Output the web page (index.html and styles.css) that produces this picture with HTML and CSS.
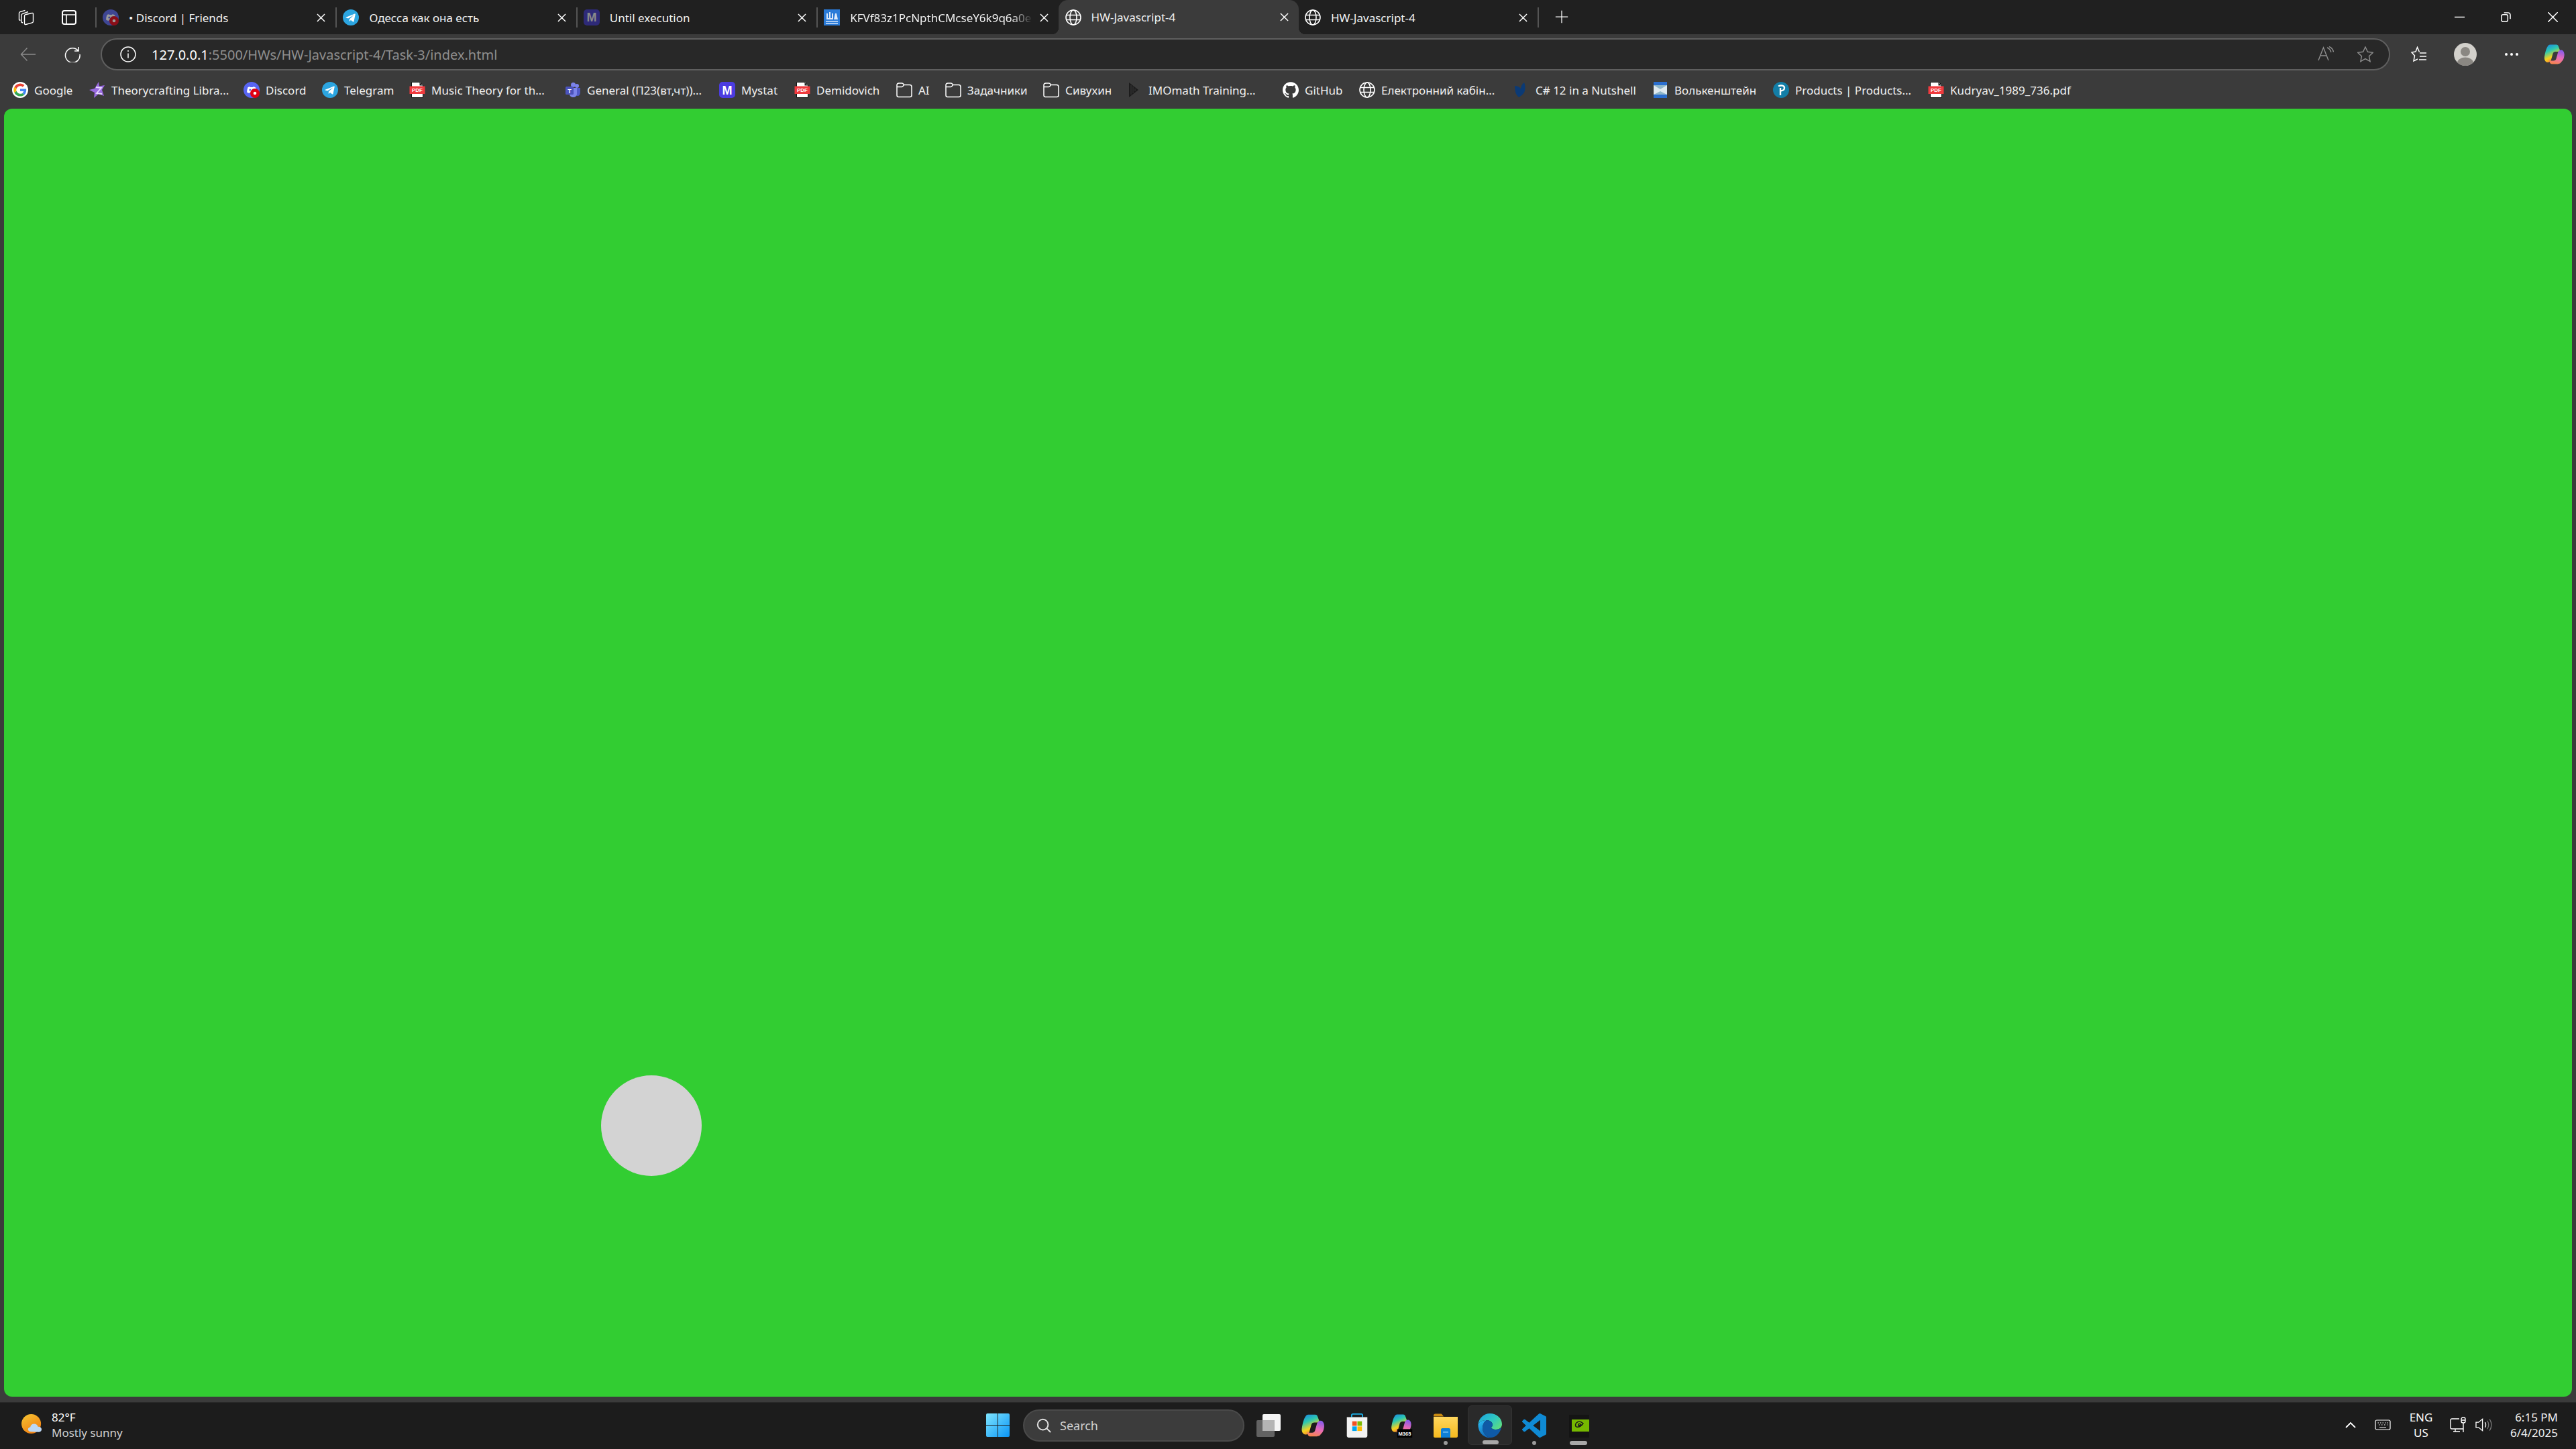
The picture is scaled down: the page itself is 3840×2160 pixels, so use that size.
FILE: index.html
```html
<!DOCTYPE html>
<html lang="en">
<head>
    <meta charset="UTF-8">
    <title>HW-Javascript-4</title>
    <link rel="stylesheet" href="styles.css">
</head>
<body>
    <svg class="defs" xmlns="http://www.w3.org/2000/svg">
        <defs>
            <linearGradient id="gCopL" x1="0" y1="0" x2="0.4" y2="1">
                <stop offset="0" stop-color="#1a7fe8"/><stop offset="0.4" stop-color="#2cc9b0"/><stop offset="0.75" stop-color="#f5d320"/><stop offset="1" stop-color="#f58a2c"/>
            </linearGradient>
            <linearGradient id="gCopR" x1="0.6" y1="0" x2="0.3" y2="1">
                <stop offset="0" stop-color="#8a5be8"/><stop offset="0.5" stop-color="#e86bb8"/><stop offset="1" stop-color="#f8864a"/>
            </linearGradient>
            <linearGradient id="gWin" x1="0" y1="0" x2="1" y2="1">
                <stop offset="0" stop-color="#7fe6ff"/><stop offset="1" stop-color="#0a94f5"/>
            </linearGradient>
            <linearGradient id="gEdge" x1="0.2" y1="0.1" x2="0.6" y2="1">
                <stop offset="0" stop-color="#27b4ec"/><stop offset="1" stop-color="#0f63b8"/>
            </linearGradient>
            <linearGradient id="gEdgeTop" x1="0" y1="0" x2="1" y2="0.7">
                <stop offset="0" stop-color="#1a9fe0"/><stop offset="0.6" stop-color="#2fc7c0"/><stop offset="1" stop-color="#5bdc84"/>
            </linearGradient>
            <linearGradient id="gSun" x1="0.2" y1="0" x2="0.8" y2="1">
                <stop offset="0" stop-color="#f6c030"/><stop offset="1" stop-color="#f07a10"/>
            </linearGradient>
            <linearGradient id="gFolder" x1="0" y1="0" x2="0" y2="1">
                <stop offset="0" stop-color="#ffd75e"/><stop offset="1" stop-color="#f5b91e"/>
            </linearGradient>

            <symbol id="globe" viewBox="0 0 24 24">
                <g fill="none" stroke="#fff" stroke-width="1.6">
                    <circle cx="12" cy="12" r="11"/><ellipse cx="12" cy="12" rx="5" ry="11"/>
                    <path d="M1.500 8.500h21M1.500 15.500h21"/>
                </g>
            </symbol>
            <symbol id="discord" viewBox="0 0 24 24">
                <circle cx="12" cy="12" r="12" fill="#5865f2"/>
                <path d="M6 8.500c2-1.300 3-1.300 3.500-1.300l.5.8h4l.5-.8c.5 0 1.500 0 3.500 1.300 1 2.300 1.500 4.500 1.300 7-1.300 1-2.500 1.300-3.500 1.500l-.8-1.300H9.500l-.8 1.300c-1-.2-2.200-.5-3.500-1.500-.2-2.500.3-4.700 1.300-7z" fill="#fff"/>
                <circle cx="9.800" cy="12" r="1.500" fill="#5865f2"/><circle cx="14.200" cy="12" r="1.500" fill="#5865f2"/>
                <circle cx="17" cy="17" r="7" fill="#e00012"/><circle cx="17" cy="17" r="2.300" fill="#fff"/>
            </symbol>
            <symbol id="telegram" viewBox="0 0 24 24">
                <circle cx="12" cy="12" r="12" fill="#2ca5e0"/>
                <path d="M4.800 11.800l13-5.200c.6-.2 1.100.2.900.9l-2.200 10.400c-.2.700-.6.900-1.200.5l-3.300-2.400-1.600 1.500c-.2.200-.4.300-.7.300l.2-3.300 6-5.400c.3-.2-.1-.4-.4-.2l-7.400 4.700-3.200-1c-.7-.2-.7-.7.100-1z" fill="#fff"/>
            </symbol>
            <symbol id="pdf" viewBox="0 0 24 24">
                <path d="M3.500 .5h13l4 4v19h-17z" fill="#fff" stroke="#111" stroke-width="1"/>
                <path d="M15.500 .5v5h5z" fill="#222"/>
                <rect x="0.500" y="6.500" width="23" height="11.500" fill="#f03a3e"/>
                <text x="12" y="15.300" text-anchor="middle" class="pdf-text">PDF</text>
            </symbol>
            <symbol id="folder" viewBox="0 0 24 24">
                <path d="M1 20V5c0-2 1-3 3-3h4.500c1.200 0 1.800.6 2.400 1.500l.6 1h8.500c2 0 3 1 3 3V20c0 1.500-1 2.500-2.500 2.500h-17C2 22.500 1 21.500 1 20zM1 7.500h7.500c1.500 0 2-1.500 3-3" fill="none" stroke="#fff" stroke-width="1.500"/>
            </symbol>
            <symbol id="copilot" viewBox="0 0 32 32">
                <path d="M10 1.500h9c2 0 3 1 3.500 3L26 14c-1-1.500-2.500-2-4-2h-4c-2 0-3.500 1-4 3l-2.500 9c-.8 2.500-2.500 4-5 4C3 28 .8 24 1.500 19.500 2.500 13 4 7.500 6 4.500 7 2.500 8.300 1.500 10 1.500z" fill="url(#gCopL)"/>
                <path d="M22 30.500h-9c-2 0-3.200-1-3.800-3l-1-3.500c1 1 2 1.500 3.300 1.500H15c2 0 3.500-1 4-3l2.500-9c.8-2.500 2.500-4 5-4 3 0 5.200 4 4.500 8.500-1 6.500-2.500 7.500-4.500 9.500-1 2-2.800 2.500-4.500 2.500z" fill="url(#gCopR)"/>
            </symbol>
        </defs>
    </svg>

    <div class="window">
        <div class="titlebar">
            <div class="tb-left">
                <svg class="ico-24" viewBox="0 0 24 24"><g fill="none" stroke="#fff" stroke-width="1.400" stroke-linejoin="round"><path d="M3.500 16.500L1.500 15.500V5.500c0-1 .5-1.500 1.500-1.800L10.500 1.500"/><path d="M7 20L5 19V8.500c0-1 .5-1.500 1.500-1.800L15 3.500"/><path d="M9.500 9.500c0-1 .5-1.500 1.500-1.800L20.500 5.500c1-.3 2 .3 2 1.500v11c0 1-.5 1.500-1.500 1.800L11.500 22.500c-1 .3-2-.3-2-1.500z"/></g></svg>
                <svg class="ico-24" viewBox="0 0 24 24"><g fill="none" stroke="#fff" stroke-width="2"><rect x="2" y="2" width="20" height="20" rx="3"/><path d="M2 8h20M8 8v14" stroke-width="1.600"/></g></svg>
            </div>
            <div class="tab">
                <svg class="favicon dim" viewBox="0 0 24 24"><use href="#discord"/></svg>
                <span class="tab-title">• Discord | Friends</span>
                <svg class="tab-close" viewBox="0 0 14 14"><path d="M1 1l12 12M13 1L1 13"/></svg>
            </div>
            <div class="tab">
                <svg class="favicon" viewBox="0 0 24 24"><use href="#telegram"/></svg>
                <span class="tab-title">Одесса как она есть</span>
                <svg class="tab-close" viewBox="0 0 14 14"><path d="M1 1l12 12M13 1L1 13"/></svg>
            </div>
            <div class="tab">
                <svg class="favicon" viewBox="0 0 24 24"><rect width="24" height="24" rx="5" fill="#2e2a78"/><text x="12" y="18" text-anchor="middle" class="fav-m dim-m">M</text></svg>
                <span class="tab-title">Until execution</span>
                <svg class="tab-close" viewBox="0 0 14 14"><path d="M1 1l12 12M13 1L1 13"/></svg>
            </div>
            <div class="tab tab-before-active">
                <svg class="favicon" viewBox="0 0 24 24"><rect width="24" height="24" fill="#2a7bd8"/><path d="M4 15V6h2v7h2V4h2v9h2V6h2v9zM15 15l2-9h2l2 9z M3 17h18v1.500H3zM3 20h18v1.500H3z" fill="#dce9fa"/></svg>
                <span class="tab-title tab-fade">KFVf83z1PcNpthCMcseY6k9q6a0e</span>
                <svg class="tab-close" viewBox="0 0 14 14"><path d="M1 1l12 12M13 1L1 13"/></svg>
            </div>
            <div class="tab active">
                <svg class="favicon" viewBox="0 0 24 24"><use href="#globe"/></svg>
                <span class="tab-title">HW-Javascript-4</span>
                <svg class="tab-close" viewBox="0 0 14 14"><path d="M1 1l12 12M13 1L1 13"/></svg>
            </div>
            <div class="tab">
                <svg class="favicon" viewBox="0 0 24 24"><use href="#globe"/></svg>
                <span class="tab-title">HW-Javascript-4</span>
                <svg class="tab-close" viewBox="0 0 14 14"><path d="M1 1l12 12M13 1L1 13"/></svg>
            </div>
            <svg class="new-tab" viewBox="0 0 24 24"><path d="M12 1v22M1 12h22"/></svg>
            <div class="caption">
                <div class="cap-btn"><svg class="ico-16" viewBox="0 0 16 16"><path d="M0 8h16"/></svg></div>
                <div class="cap-btn"><svg class="ico-16" viewBox="0 0 16 16"><rect x="1" y="4" width="10" height="11" rx="2.500"/><path d="M5 1h6c2.500 0 4 1.500 4 4v6"/></svg></div>
                <div class="cap-btn"><svg class="ico-16" viewBox="0 0 16 16"><path d="M0 0l16 16M16 0L0 16"/></svg></div>
            </div>
        </div>

        <div class="toolbar">
            <div class="nav-btn">
                <svg class="ico-24 back" viewBox="0 0 24 24"><path d="M23 12H1.500M10.500 2.500L1.500 12l9 9.500"/></svg>
            </div>
            <div class="nav-btn">
                <svg class="ico-24 reload" viewBox="0 0 24 24"><path d="M20.500 6.500A10.800 10.800 0 1 0 23 12M21 1v6h-6"/></svg>
            </div>
            <div class="address">
                <svg class="ico-24 info" viewBox="0 0 24 24"><circle cx="12" cy="12" r="11"/><path d="M12 10.500v7"/><path d="M12 6v2"/></svg>
                <span class="url"><span class="url-host">127.0.0.1</span>:5500/HWs/HW-Javascript-4/Task-3/index.html</span>
                <svg class="ico-24 addr-ico" viewBox="0 0 24 24"><path d="M1 21L8.500 2l7.500 19M4 14h9M14 2c3 1 5 3.500 6 7M17 .5c3.500 1.500 6 4.500 6.500 8"/></svg>
                <svg class="ico-24 addr-ico" viewBox="0 0 24 24"><path d="M12 1l3.400 7.300 8 1-5.900 5.400 1.600 7.900-7.100-4-7.100 4 1.600-7.900L.6 9.300l8-1z"/></svg>
            </div>
            <div class="tool-btn">
                <svg class="ico-24 favs" viewBox="0 0 24 24"><path d="M12.500 8.500L9.500 1.500 7 8 1 9l4.500 5L4 22l6-3M13 10h10M13 15h10M12 20h11"/></svg>
            </div>
            <div class="tool-btn">
                <svg class="avatar" viewBox="0 0 34 34"><defs><clipPath id="avClip"><circle cx="17" cy="17" r="17"/></clipPath></defs><circle cx="17" cy="17" r="17" fill="#d2d0cb"/><g clip-path="url(#avClip)" fill="#8a8782"><circle cx="17" cy="13" r="7"/><ellipse cx="17" cy="30" rx="12" ry="8.500"/></g></svg>
            </div>
            <div class="tool-btn">
                <svg class="dots" viewBox="0 0 20 4"><circle cx="2" cy="2" r="2"/><circle cx="10" cy="2" r="2"/><circle cx="18" cy="2" r="2"/></svg>
            </div>
            <div class="tool-btn last">
                <svg class="copilot" viewBox="0 0 32 32"><use href="#copilot"/></svg>
            </div>
        </div>

        <div class="bookmarks">
            <div class="bm"><svg class="bm-ico" viewBox="-6 -6 60 60"><circle cx="24" cy="24" r="30" fill="#fff"/><path fill="#EA4335" d="M24 9.500c3.540 0 6.710 1.220 9.210 3.600l6.850-6.850C35.900 2.380 30.470 0 24 0 14.620 0 6.510 5.380 2.560 13.220l7.980 6.190C12.430 13.720 17.740 9.500 24 9.500z"/><path fill="#4285F4" d="M46.980 24.550c0-1.570-.15-3.090-.38-4.550H24v9.020h12.940c-.58 2.960-2.260 5.480-4.780 7.180l7.730 6c4.510-4.180 7.090-10.360 7.090-17.650z"/><path fill="#FBBC05" d="M10.530 28.590c-.48-1.450-.76-2.990-.76-4.590s.27-3.140.76-4.590l-7.980-6.190C.92 16.460 0 20.120 0 24c0 3.880.92 7.540 2.560 10.780l7.970-6.190z"/><path fill="#34A853" d="M24 48c6.480 0 11.930-2.130 16.090-5.810l-7.730-6c-2.150 1.450-4.920 2.300-8.360 2.300-6.260 0-11.570-4.220-13.470-9.910l-7.980 6.190C6.510 42.620 14.620 48 24 48z"/></svg><span>Google</span></div>
            <div class="bm"><svg class="bm-ico" viewBox="0 0 24 24"><path d="M14 0l1 6.500 8-1.500-4 7 3 9-8-3-7 6 1-8-8-4 8-2z" fill="#9a6be0"/><path d="M10 8l8 1-7 8 8 1" fill="none" stroke="#e6d8ff" stroke-width="1.800"/></svg><span>Theorycrafting Libra...</span></div>
            <div class="bm"><svg class="bm-ico" viewBox="0 0 24 24"><use href="#discord"/></svg><span>Discord</span></div>
            <div class="bm"><svg class="bm-ico" viewBox="0 0 24 24"><use href="#telegram"/></svg><span>Telegram</span></div>
            <div class="bm"><svg class="bm-ico" viewBox="0 0 24 24"><use href="#pdf"/></svg><span>Music Theory for th...</span></div>
            <div class="bm"><svg class="bm-ico" viewBox="0 0 24 24"><circle cx="18" cy="6" r="3" fill="#7b83eb"/><circle cx="12.500" cy="4.500" r="3.500" fill="#7b83eb"/><path d="M15 9h8v7c0 3-2 5-4 5s-4-2-4-5z" fill="#5059c9"/><path d="M7 9h11v9c0 3-2.500 5-5.500 5S7 21 7 18z" fill="#7b83eb"/><rect x="1" y="7" width="12" height="12" rx="1.500" fill="#4b53bc"/><text x="7" y="16.500" text-anchor="middle" class="fav-t">T</text></svg><span>General (П23(вт,чт))...</span></div>
            <div class="bm"><svg class="bm-ico" viewBox="0 0 24 24"><rect width="24" height="24" rx="5" fill="#4b3ce0"/><text x="12" y="18.500" text-anchor="middle" class="fav-m">M</text></svg><span>Mystat</span></div>
            <div class="bm"><svg class="bm-ico" viewBox="0 0 24 24"><use href="#pdf"/></svg><span>Demidovich</span></div>
            <div class="bm"><svg class="bm-ico" viewBox="0 0 24 24"><use href="#folder"/></svg><span>AI</span></div>
            <div class="bm"><svg class="bm-ico" viewBox="0 0 24 24"><use href="#folder"/></svg><span>Задачники</span></div>
            <div class="bm"><svg class="bm-ico" viewBox="0 0 24 24"><use href="#folder"/></svg><span>Сивухин</span></div>
            <div class="bm"><svg class="bm-ico" viewBox="0 0 24 24"><path d="M4 1l14 11L4 23z" fill="#1c1c1c"/><path d="M7 5v14M10 7v10M13 10v4" stroke="#3b3b3b" stroke-width="1"/></svg><span>IMOmath Training...</span></div>
            <div class="bm"><svg class="bm-ico" viewBox="0 0 24 24"><path fill="#fff" d="M12 .297c-6.630 0-12 5.373-12 12 0 5.303 3.438 9.800 8.205 11.385.6.113.82-.258.82-.577 0-.285-.01-1.040-.015-2.040-3.338.724-4.042-1.610-4.042-1.610C4.422 18.070 3.633 17.700 3.633 17.700c-1.087-.744.084-.729.084-.729 1.205.084 1.838 1.236 1.838 1.236 1.070 1.835 2.809 1.305 3.495.998.108-.776.417-1.305.76-1.605-2.665-.3-5.466-1.332-5.466-5.930 0-1.310.465-2.380 1.235-3.220-.135-.303-.54-1.523.105-3.176 0 0 1.005-.322 3.300 1.230.96-.267 1.980-.399 3-.405 1.020.006 2.040.138 3 .405 2.280-1.552 3.285-1.230 3.285-1.230.645 1.653.24 2.873.12 3.176.765.84 1.230 1.910 1.230 3.220 0 4.610-2.805 5.625-5.475 5.920.42.36.81 1.096.81 2.220 0 1.606-.015 2.896-.015 3.286 0 .315.21.69.825.57C20.565 22.092 24 17.592 24 12.297c0-6.627-5.373-12-12-12"/></svg><span>GitHub</span></div>
            <div class="bm"><svg class="bm-ico" viewBox="0 0 24 24"><use href="#globe"/></svg><span>Електронний кабін...</span></div>
            <div class="bm"><svg class="bm-ico" viewBox="0 0 24 24"><path d="M2 6c3 0 7 1.500 9 4 0-3 2-7 5-9 2 4 2 11 0 15-2 3-5 5-8 7-2-2-4-4-5-8-.6-3-1-6-1-9z" fill="#0b3a75"/></svg><span>C# 12 in a Nutshell</span></div>
            <div class="bm"><svg class="bm-ico" viewBox="0 0 24 24"><rect x="2" width="20" height="24" fill="#2a6ecf"/><rect x="2" y="5" width="20" height="14" fill="#dfe9ef"/><path d="M2 5l10 6 10-6M2 19l10-5 10 5" fill="#8fb6c9"/></svg><span>Волькенштейн</span></div>
            <div class="bm"><svg class="bm-ico" viewBox="0 0 24 24"><circle cx="12" cy="12" r="12" fill="#137ea7"/><path d="M8 6.500c4-2 9-1 9 2.500s-4 4.500-6 4.500M11 9v11" fill="none" stroke="#fff" stroke-width="2.400"/></svg><span>Products | Products...</span></div>
            <div class="bm"><svg class="bm-ico" viewBox="0 0 24 24"><use href="#pdf"/></svg><span>Kudryav_1989_736.pdf</span></div>
        </div>

        <main class="stage">
            <div class="ball"></div>
        </main>
    </div>

    <footer class="taskbar">
        <div class="weather">
            <svg class="weather-ico" viewBox="0 0 34 32"><circle cx="15" cy="15" r="15" fill="url(#gSun)"/><path d="M15 27c-3 0-5-1.500-5-3.500 0-2 1.500-3.500 3.500-3.500.5-3 3-5 6-5s5.500 2 6 4.500c3-.5 5.500 1.500 5.500 4 0 2.200-1.800 4-4 4z" fill="#bcd8f6"/></svg>
            <div class="weather-text">
                <div class="temp">82°F</div>
                <div class="cond">Mostly sunny</div>
            </div>
        </div>
        <div class="task-center">
            <svg class="start" viewBox="0 0 35 35"><path d="M2 0h15v17H0V2a2 2 0 0 1 2-2zM18 0h15a2 2 0 0 1 2 2v15H18zM0 18h17v17H2a2 2 0 0 1-2-2zM18 18h17v15a2 2 0 0 1-2 2H18z" fill="url(#gWin)"/></svg>
            <div class="search">
                <svg class="search-ico" viewBox="0 0 24 24"><circle cx="10.500" cy="10.500" r="8.500"/><path d="M16.500 16.500L23 23"/></svg>
                <span>Search</span>
            </div>
            <div class="slot">
                <svg class="task-ico" viewBox="0 0 36 34"><rect x="9" y="0" width="27" height="25" rx="2" fill="#f4f4f4"/><rect x="0" y="9" width="27" height="25" rx="2" fill="#6a6a6a" fill-opacity="0.9"/><rect x="9" y="9" width="18" height="16" fill="#b4b4b4"/></svg>
            </div>
            <div class="slot">
                <svg class="task-ico" viewBox="0 0 32 32"><use href="#copilot"/></svg>
            </div>
            <div class="slot">
                <svg class="task-ico" viewBox="0 0 36 40"><path d="M9 6V3c0-1.500 1-2 2-2h14c1 0 2 .5 2 2v3" fill="none" stroke="#1bb1ea" stroke-width="2"/><path d="M1 6h34v31c0 1.500-1 3-3 3H4c-2 0-3-1.500-3-3z" fill="#f2f2f2"/><rect x="10" y="13" width="7.500" height="7.500" fill="#f25022"/><rect x="18.500" y="13" width="7.500" height="7.500" fill="#7fba00"/><rect x="10" y="21.500" width="7.500" height="7.500" fill="#00a4ef"/><rect x="18.500" y="21.500" width="7.500" height="7.500" fill="#ffb900"/></svg>
            </div>
            <div class="slot">
                <svg class="task-ico" viewBox="0 0 36 40"><g transform="scale(1.100)"><use href="#copilot" width="32" height="32"/></g><rect x="11" y="26" width="25" height="14" fill="#000"/><text x="23.500" y="37" text-anchor="middle" class="m365">M365</text></svg>
            </div>
            <div class="slot">
                <svg class="task-ico" viewBox="0 0 36 36"><path d="M0 3c0-1.500 1-2.500 2.500-2.500h8c1.500 0 2 .5 3 2l1.500 2H0z" fill="#c98a10"/><path d="M0 5h36v29c0 1-1 2-2 2H2c-1 0-2-1-2-2z" fill="url(#gFolder)"/><path d="M11 24c0-1 1-2 2-2h10c1 0 2 1 2 2v12H11z" fill="#0f7fd6"/><rect x="14" y="27" width="8" height="1.600" fill="#7fc6f5"/></svg>
                <i class="dot"></i>
            </div>
            <div class="slot slot-active">
                <svg class="task-ico edge" viewBox="0 0 38 38"><path d="M1.500 17C2.500 8 10 1 19 1c10 0 18 7 18 16 0 5-4 8-9 8-4 0-7-1.500-7-3 0-1 2-1 2-4 0-4-4-7-9-7C8 11 4 13 1.500 17z" fill="url(#gEdgeTop)"/><path d="M1.500 17C4 13 8 11 14 11c-3 2-6 6-6 12 0 7 6 13 12 14-1 .2-2 .3-3 .2C8 36 1 28 1.500 17z" fill="url(#gEdge)"/><path d="M14 11c5 0 9 3 9 7 0 3-2 3-2 4 0 1.500 3 3 7 3 3 0 6-1 8-3-2 9-9 15-16 15-6-1-12-7-12-14 0-6 3-10 6-12z" fill="#0f5aa6"/></svg>
                <i class="bar"></i>
            </div>
            <div class="slot">
                <svg class="task-ico" viewBox="0 0 24 24"><path fill="#0f8ad4" d="M23.150 2.587L18.210.21a1.494 1.494 0 0 0-1.705.29l-9.460 8.630-4.120-3.128a.999.999 0 0 0-1.276.057L.327 7.261A1 1 0 0 0 .326 8.740L3.899 12 .326 15.260a1 1 0 0 0 .001 1.479L1.650 17.940a.999.999 0 0 0 1.276.057l4.120-3.128 9.460 8.630a1.492 1.492 0 0 0 1.704.29l4.942-2.377A1.500 1.500 0 0 0 24 20.060V3.939a1.500 1.500 0 0 0-.85-1.352zm-5.146 14.861L10.826 12l7.178-5.448v10.896z"/></svg>
                <i class="dot"></i>
            </div>
            <div class="slot">
                <svg class="task-ico" viewBox="0 0 36 36"><rect x="4" y="2" width="30" height="34" fill="#141414"/><rect x="8" y="9" width="26" height="18" fill="#76b900"/><path d="M15 14c3-3 7-2 10 1-3 4-6 6-10 5-2-1-2-4 0-6zM18 16c1.500-1 2.500-.5 3.500.5-1.500 1.500-2.500 2-3.500 1.500z" fill="none" stroke="#1a1a1a" stroke-width="1.500"/></svg>
                <i class="bar bar-long"></i>
            </div>
        </div>
        <div class="tray">
            <svg class="tray-chevron" viewBox="0 0 16 10"><path d="M1 9l7-7 7 7"/></svg>
            <svg class="tray-kbd" viewBox="0 0 24 16"><rect x="1" y="1" width="22" height="14" rx="2"/><path d="M4.500 5h1.500M8 5h1.500M11.500 5H13M15 5h1.500M18.500 5H20M6 8h1.500M10 8h1.500M14 8h1.500M18 8h1M7 12h10"/></svg>
            <div class="lang"><div>ENG</div><div>US</div></div>
            <svg class="tray-net" viewBox="0 0 24 24"><path d="M14 3H3a2 2 0 0 0-2 2v11a2 2 0 0 0 2 2h17M8 18v4M5 22h10"/><rect x="17" y="1" width="6" height="8" rx="2.500"/><path d="M20 9v14M17 5h6"/></svg>
            <svg class="tray-vol" viewBox="0 0 26 22"><path d="M1 7h4l6-5v18l-6-5H1z"/><path d="M15 7c1.500 2.500 1.500 5.500 0 8"/><path class="faint" d="M18.500 4.500c2.500 4 2.500 9 0 13M22 2c3.500 5.500 3.500 12.500 0 18"/></svg>
            <div class="clock"><div>6:15 PM</div><div>6/4/2025</div></div>
        </div>
    </footer>
</body>
</html>
```

FILE: styles.css
```css
* {
    box-sizing: border-box;
}
html, body {
    margin: 0;
    height: 100%;
}
body {
    width: 3840px;
    height: 2160px;
    overflow: hidden;
    display: flex;
    flex-direction: column;
    background: #3b3b3b;
    color: #fff;
    font-family: "Noto Sans", "Open Sans", sans-serif;
    font-size: 17px;
}
svg {
    flex: none;
    display: block;
}
.defs {
    position: absolute;
    width: 0;
    height: 0;
}
.window {
    flex: 1;
    display: flex;
    flex-direction: column;
    min-height: 0;
}

/* title bar and tabs */
.titlebar {
    height: 51px;
    display: flex;
    align-items: stretch;
    background: #202020;
}
.tb-left {
    width: 144px;
    padding-left: 27px;
    display: flex;
    align-items: center;
    gap: 40px;
    border-right: 2px solid #555;
    margin: 11px 0 10px;
}
.tab {
    width: 358.4px;
    display: flex;
    align-items: center;
    padding-left: 9px;
    margin: 11px 0 10px;
    border-right: 2px solid #555;
}
.tab-before-active {
    border-right: none;
}
.tab.active {
    position: relative;
    margin: 0;
    padding: 0 0 0 10px;
    background: #3b3b3b;
    border-right: none;
    border-radius: 14px 14px 0 0;
}
.tab.active::before,
.tab.active::after {
    content: "";
    position: absolute;
    bottom: 0;
    width: 10px;
    height: 10px;
}
.tab.active::before {
    left: -10px;
    background: radial-gradient(circle at 0 0, transparent 10px, #3b3b3b 10.5px);
}
.tab.active::after {
    right: -10px;
    background: radial-gradient(circle at 100% 0, transparent 10px, #3b3b3b 10.5px);
}
.favicon {
    width: 24px;
    height: 24px;
    margin-right: 15px;
}
.dim {
    opacity: 0.55;
}
.tab-title {
    flex: 1;
    white-space: nowrap;
    overflow: hidden;
    color: #f2f2f2;
}
.tab-fade {
    -webkit-mask-image: linear-gradient(to right, #000 88%, transparent);
    mask-image: linear-gradient(to right, #000 88%, transparent);
}
.tab-close {
    width: 13px;
    height: 13px;
    margin: 0 15px 0 10px;
    fill: none;
    stroke: #fff;
    stroke-width: 1.6;
}
.new-tab {
    width: 20px;
    height: 20px;
    margin: 15px 0 0 24px;
    fill: none;
    stroke: #fff;
    stroke-width: 1.5;
}
.caption {
    margin-left: auto;
    display: flex;
}
.cap-btn {
    width: 69.5px;
    display: flex;
    align-items: center;
    justify-content: center;
}
.ico-16 {
    width: 15px;
    height: 15px;
    fill: none;
    stroke: #fff;
    stroke-width: 1.6;
}
.ico-24 {
    width: 24px;
    height: 24px;
}

/* toolbar */
.toolbar {
    height: 59px;
    padding: 6px 4px 5px 18px;
    display: flex;
    align-items: center;
}
.nav-btn {
    width: 48px;
    margin-right: 18px;
    display: flex;
    justify-content: center;
}
.back {
    fill: none;
    stroke: #8c8c8c;
    stroke-width: 1.4;
}
.reload {
    fill: none;
    stroke: #fff;
    stroke-width: 1.5;
}
.address {
    flex: 1;
    height: 48px;
    padding: 0 23px 0 27px;
    display: flex;
    align-items: center;
    background: #282828;
    border: 2px solid #5f5f5f;
    border-radius: 24px;
    margin-right: 8px;
}
.info {
    fill: none;
    stroke: #fff;
    stroke-width: 1.5;
}
.url {
    flex: 1;
    margin-left: 23px;
    font-size: 20px;
    color: #8f8f8f;
    white-space: nowrap;
}
.url-host {
    color: #fff;
}
.addr-ico {
    margin-left: 35px;
    fill: none;
    stroke: #8f8f8f;
    stroke-width: 1.4;
}
.tool-btn {
    width: 69px;
    display: flex;
    justify-content: center;
}
.tool-btn.last {
    width: 58px;
}
.favs {
    fill: none;
    stroke: #fff;
    stroke-width: 1.5;
}
.avatar {
    width: 34px;
    height: 34px;
}
.dots {
    width: 20px;
    height: 4px;
    fill: #fff;
}
.copilot {
    width: 33px;
    height: 32px;
}

/* bookmarks */
.bookmarks {
    height: 52px;
    padding: 0 0 4px 18px;
    display: grid;
    grid-template-columns: 115px 230px 117px 130px 232px 230px 112px 152px 73px 146px 124px 233px 114px 230px 207px 180px 231px auto;
    justify-content: start;
    align-items: center;
    white-space: nowrap;
    color: #f0f0f0;
}
.bm {
    display: flex;
    align-items: center;
    gap: 9px;
}
.bm-ico {
    width: 24px;
    height: 24px;
}
.pdf-text {
    font-family: "Liberation Sans", sans-serif;
    font-size: 8px;
    font-weight: 700;
    fill: #fff;
}
.fav-m {
    font-family: "Liberation Sans", sans-serif;
    font-size: 18px;
    font-weight: 700;
    fill: #fff;
}
.dim-m {
    fill: #8a8a8a;
}
.fav-t {
    font-family: "Liberation Sans", sans-serif;
    font-size: 9px;
    font-weight: 700;
    fill: #fff;
}

/* page content */
.stage {
    flex: 1;
    position: relative;
    margin: 0 6px 8px;
    background: #32cd32;
    border-radius: 12px;
}
.ball {
    position: absolute;
    left: 890px;
    top: 1441px;
    width: 150px;
    height: 150px;
    border-radius: 50%;
    background: #d3d3d3;
}

/* windows taskbar */
.taskbar {
    height: 70px;
    padding-bottom: 2px;
    position: relative;
    display: flex;
    align-items: center;
    background: #1c1c1c;
    border-top: 1px solid #2a2a2a;
}
.weather {
    position: absolute;
    left: 32px;
    top: -2px;
    height: 100%;
    display: flex;
    align-items: center;
    gap: 12px;
}
.weather-ico {
    width: 33px;
    height: 31px;
}
.temp {
    line-height: 23px;
}
.cond {
    line-height: 23px;
    color: #cfcfcf;
}
.task-center {
    margin-left: 1470px;
    height: 100%;
    display: flex;
    align-items: center;
}
.start {
    width: 35px;
    height: 35px;
    margin-right: 20px;
}
.search {
    width: 330px;
    height: 48px;
    padding-left: 18px;
    margin-right: 3px;
    display: flex;
    align-items: center;
    gap: 13px;
    background: #3c3c3c;
    border: 2px solid #4a4a4a;
    border-radius: 24px;
    color: #cfcfcf;
    font-size: 18px;
}
.search-ico {
    width: 22px;
    height: 22px;
    fill: none;
    stroke: #e0e0e0;
    stroke-width: 2.2;
}
.slot {
    width: 66px;
    height: 59px;
    position: relative;
    display: flex;
    align-items: center;
    justify-content: center;
}
.slot-active {
    background: #2a2a2a;
    border: 1px solid #333;
    border-radius: 6px;
}
.task-ico {
    width: 36px;
    height: 36px;
}
.edge {
    width: 38px;
    height: 38px;
}
.dot {
    position: absolute;
    left: 30px;
    bottom: 0;
    width: 6px;
    height: 6px;
    border-radius: 50%;
    background: #9a9a9a;
}
.bar {
    position: absolute;
    left: 21px;
    bottom: 0;
    width: 24px;
    height: 6px;
    border-radius: 3px;
    background: #a8a8a8;
}
.bar-long {
    width: 26px;
    left: 20px;
}
.tray {
    position: absolute;
    right: 27px;
    top: -2px;
    height: 100%;
    display: flex;
    align-items: center;
}
.tray-chevron {
    width: 16px;
    height: 10px;
    fill: none;
    stroke: #fff;
    stroke-width: 1.8;
}
.tray-kbd {
    width: 24px;
    height: 16px;
    margin-left: 28px;
    fill: none;
    stroke: #fff;
    stroke-width: 1.2;
}
.lang {
    width: 50px;
    margin-left: 20px;
    text-align: center;
    line-height: 23px;
}
.tray-net {
    width: 24px;
    height: 24px;
    margin-left: 18px;
    fill: none;
    stroke: #fff;
    stroke-width: 1.4;
}
.tray-vol {
    width: 25px;
    height: 22px;
    margin-left: 14px;
    fill: none;
    stroke: #fff;
    stroke-width: 1.4;
}
.tray-vol .faint {
    stroke: #777;
}
.clock {
    width: 98px;
    text-align: right;
    line-height: 23px;
    color: #f0f0f0;
}
.m365 {
    font-family: "Liberation Sans", sans-serif;
    font-size: 8.5px;
    font-weight: 700;
    fill: #fff;
}
```
